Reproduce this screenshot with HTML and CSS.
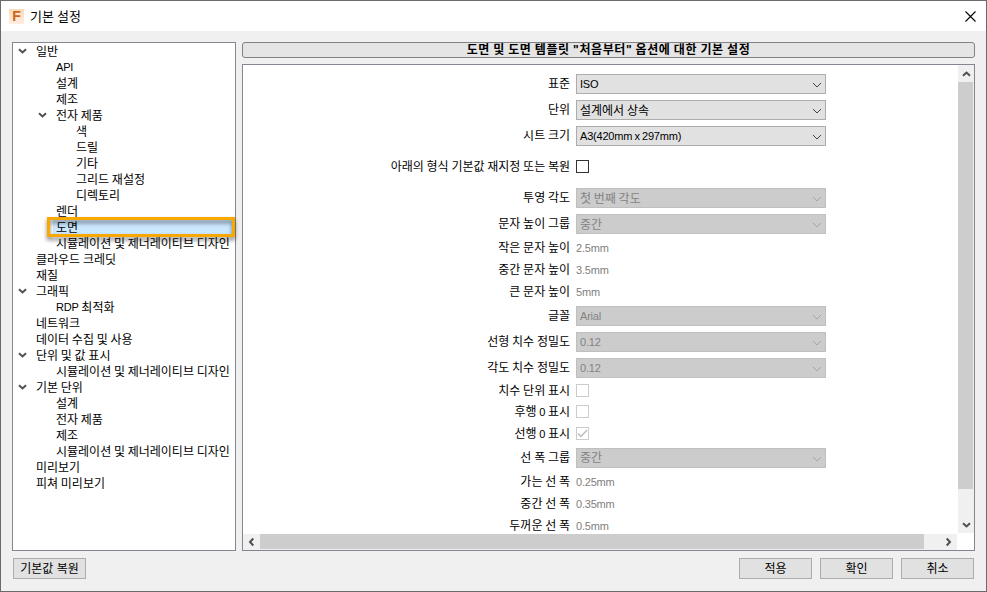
FILE: index.html
```html
<!DOCTYPE html>
<html lang="ko">
  <head>
    <meta charset="UTF-8" />
    <meta name="viewport" content="width=device-width, initial-scale=1.0" />
    <title>기본 설정</title>
    <link rel="stylesheet" href="styles.css">
  </head>
  <body>
    <!-- 공용 아이콘 -->
    <svg class="icon-defs">
      <symbol id="chevron" viewBox="0 0 10 6"><path d="M1 1l4 4 4-4" fill="none" stroke="currentColor" /></symbol>
      <symbol id="arrow" viewBox="0 0 9 6"><path d="M1 1.2l3.5 3.3L8 1.2" fill="none" stroke="currentColor" stroke-width="2" /></symbol>
    </svg>

    <div class="dialog">
      <div class="titlebar">
        <span class="app-icon">F</span>
        <span class="title">기본 설정</span>
        <svg class="close" width="11" height="11" viewBox="0 0 11 11"><path d="M.5.5l10 10M10.5.5l-10 10" stroke="#000" stroke-width="1.1" /></svg>
      </div>

      <div class="main">
        <div class="tree">
          <div class="node"><svg class="toggle"><use href="#arrow" /></svg>일반</div>
          <div class="node level-2"><span class="latin">API</span></div>
          <div class="node level-2">설계</div>
          <div class="node level-2">제조</div>
          <div class="node level-2"><svg class="toggle"><use href="#arrow" /></svg>전자 제품</div>
          <div class="node level-3">색</div>
          <div class="node level-3">드릴</div>
          <div class="node level-3">기타</div>
          <div class="node level-3">그리드 재설정</div>
          <div class="node level-3">디렉토리</div>
          <div class="node level-2">렌더</div>
          <div class="node level-2 selected">도면<span class="highlight"></span></div>
          <div class="node level-2">시뮬레이션 및 제너레이티브 디자인</div>
          <div class="node">클라우드 크레딧</div>
          <div class="node">재질</div>
          <div class="node"><svg class="toggle"><use href="#arrow" /></svg>그래픽</div>
          <div class="node level-2"><span class="latin">RDP</span>&nbsp;최적화</div>
          <div class="node">네트워크</div>
          <div class="node">데이터 수집 및 사용</div>
          <div class="node"><svg class="toggle"><use href="#arrow" /></svg>단위 및 값 표시</div>
          <div class="node level-2">시뮬레이션 및 제너레이티브 디자인</div>
          <div class="node"><svg class="toggle"><use href="#arrow" /></svg>기본 단위</div>
          <div class="node level-2">설계</div>
          <div class="node level-2">전자 제품</div>
          <div class="node level-2">제조</div>
          <div class="node level-2">시뮬레이션 및 제너레이티브 디자인</div>
          <div class="node">미리보기</div>
          <div class="node">피쳐 미리보기</div>
        </div>

        <div class="content">
          <div class="heading">도면 및 도면 템플릿 "처음부터" 옵션에 대한 기본 설정</div>
          <div class="panel">
            <div class="form">
              <div class="row"><label>표준</label><div class="select latin">ISO<svg><use href="#chevron" /></svg></div></div>
              <div class="row"><label>단위</label><div class="select">설계에서 상속<svg><use href="#chevron" /></svg></div></div>
              <div class="row"><label>시트 크기</label><div class="select latin">A3(420mm x 297mm)<svg><use href="#chevron" /></svg></div></div>
              <div class="row tall"><label>아래의 형식 기본값 재지정 또는 복원</label><span class="check"></span></div>
              <div class="row"><label>투영 각도</label><div class="select disabled">첫 번째 각도<svg><use href="#chevron" /></svg></div></div>
              <div class="row"><label>문자 높이 그룹</label><div class="select disabled">중간<svg><use href="#chevron" /></svg></div></div>
              <div class="row text"><label>작은 문자 높이</label><span class="value latin">2.5mm</span></div>
              <div class="row text"><label>중간 문자 높이</label><span class="value latin">3.5mm</span></div>
              <div class="row text"><label>큰 문자 높이</label><span class="value latin">5mm</span></div>
              <div class="row"><label>글꼴</label><div class="select disabled latin">Arial<svg><use href="#chevron" /></svg></div></div>
              <div class="row"><label>선형 치수 정밀도</label><div class="select disabled latin">0.12<svg><use href="#chevron" /></svg></div></div>
              <div class="row"><label>각도 치수 정밀도</label><div class="select disabled latin">0.12<svg><use href="#chevron" /></svg></div></div>
              <div class="row option"><label>치수 단위 표시</label><span class="check disabled"></span></div>
              <div class="row option"><label>후행 <span class="latin">0</span> 표시</label><span class="check disabled"></span></div>
              <div class="row option"><label>선행 <span class="latin">0</span> 표시</label><span class="check disabled"><svg width="11" height="11" viewBox="0 0 11 11"><path d="M1 5.5l3 3 6-6.5" fill="none" stroke="#bbb" stroke-width="1.4" /></svg></span></div>
              <div class="row"><label>선 폭 그룹</label><div class="select disabled">중간<svg><use href="#chevron" /></svg></div></div>
              <div class="row text"><label>가는 선 폭</label><span class="value latin">0.25mm</span></div>
              <div class="row text"><label>중간 선 폭</label><span class="value latin">0.35mm</span></div>
              <div class="row text"><label>두꺼운 선 폭</label><span class="value latin">0.5mm</span></div>
            </div>
            <div class="scroll-y">
              <svg class="up"><use href="#arrow" /></svg>
              <div class="thumb"></div>
              <svg class="down"><use href="#arrow" /></svg>
            </div>
            <div class="scroll-x">
              <svg class="left"><use href="#arrow" /></svg>
              <div class="thumb"></div>
              <svg class="right"><use href="#arrow" /></svg>
            </div>
          </div>
        </div>
      </div>

      <div class="footer">
        <button class="restore">기본값 복원</button>
        <button>적용</button>
        <button>확인</button>
        <button>취소</button>
      </div>
    </div>
  </body>
</html>
```
FILE: styles.css
```css
* {
  box-sizing: border-box;
}
body {
  margin: 0;
  font-family: "Liberation Sans", "Noto Sans CJK KR", sans-serif;
  font-size: 12px;
  word-spacing: -0.6px;
  color: #000;
}
svg {
  display: block;
  flex: none;
}
.icon-defs {
  position: absolute;
  width: 0;
  height: 0;
}
.latin {
  font-size: 11px;
  letter-spacing: -0.2px;
}
.dialog {
  display: flex;
  flex-direction: column;
  width: 987px;
  height: 592px;
  border: 1px solid #6b6b6b;
  background-color: #f0f0f0;
  overflow: hidden;
}

/* 제목 표시줄 */
.titlebar {
  display: flex;
  align-items: center;
  height: 30px;
  padding: 0 10px 0 8px;
  background-color: #fff;
}
.app-icon {
  width: 15px;
  height: 15px;
  margin-right: 6px;
  background: linear-gradient(#fbd9b8, #fdeee2);
  color: #c9681c;
  font-size: 14px;
  font-weight: bold;
  line-height: 14px;
  text-align: center;
}
.title {
  padding-bottom: 2px;
  font-size: 13px;
}
.close {
  margin-left: auto;
}

.main {
  display: flex;
  gap: 6px;
  height: 509px;
  margin: 11px 11px 0;
}

/* 왼쪽 트리 */
.tree {
  width: 224px;
  border: 1px solid #828790;
  background-color: #fff;
}
.node {
  position: relative;
  display: flex;
  align-items: center;
  height: 16px;
  padding-top: 2px;
  padding-left: 23px;
  line-height: 16px;
  white-space: nowrap;
}
.node .latin {
  margin-bottom: 2px;
}
.level-2 {
  padding-left: 43px;
}
.level-3 {
  padding-left: 63px;
}
.toggle {
  width: 9px;
  height: 6px;
  margin: 0 9px 2px -18px;
  color: #505050;
}
.selected {
  margin-left: 40px;
  padding-left: 3px;
  background-color: #cce8ff;
}
.highlight {
  position: absolute;
  top: -2px;
  left: -6px;
  width: 188px;
  height: 20px;
  border: 3px solid #f9a800;
  filter: drop-shadow(0 3px 2px rgba(0, 0, 0, 0.5));
  z-index: 1;
}

/* 오른쪽 설정 */
.content {
  display: flex;
  flex-direction: column;
  gap: 6px;
  width: 733px;
}
.heading {
  height: 16px;
  border: 1px solid #828282;
  border-radius: 3px;
  background-color: #e5e5e5;
  font-weight: bold;
  letter-spacing: 0.6px;
  line-height: 15px;
  text-align: center;
}
.panel {
  display: grid;
  grid-template-columns: 1fr 17px;
  grid-template-rows: 1fr 17px;
  height: 487px;
  border: 1px solid #828790;
  background-color: #fff;
}
.form {
  display: flex;
  flex-direction: column;
  gap: 6px;
  height: 468px;
  padding-top: 9px;
}
.row {
  display: flex;
  flex: none;
  align-items: center;
  gap: 6px;
  height: 20px;
}
.row.tall {
  height: 30px;
}
.row.tall .check {
  margin-bottom: 1px;
}
.row.text {
  height: 16px;
}
.row.option {
  align-items: flex-start;
  height: 15.33px;
}
label {
  width: 327px;
  padding-top: 1px;
  line-height: 15px;
  text-align: right;
  white-space: nowrap;
}
.row.option label {
  padding-top: 0;
}
.select {
  display: flex;
  align-items: center;
  justify-content: space-between;
  width: 250px;
  height: 20px;
  padding: 1px 3px 0;
  border: 1px solid #adadad;
  background-color: #e1e1e1;
  line-height: 18px;
}
.select.latin {
  padding-top: 0;
}
.select svg {
  width: 10px;
  height: 6px;
  margin-top: 1px;
  color: #444;
}
.select.disabled {
  border-color: #bfbfbf;
  background-color: #ccc;
  color: #838383;
}
.select.disabled svg {
  color: #a5a5a5;
}
.value {
  color: #808080;
}
.check {
  width: 13px;
  height: 13px;
  border: 1px solid #333;
  background-color: #fff;
}
.check.disabled {
  border-color: #ccc;
}

/* 스크롤바 */
.scroll-y,
.scroll-x {
  display: flex;
  align-items: center;
  background-color: #f0f0f0;
}
.scroll-y {
  flex-direction: column;
  width: 16px;
  height: 468px;
  margin-left: 1px;
}
.scroll-x {
  width: 714px;
  height: 16px;
  margin-top: 1px;
}
.scroll-y svg,
.scroll-x svg {
  width: 9px;
  height: 6px;
  color: #505050;
}
.scroll-y .up {
  margin: 6px 0 5px;
  transform: rotate(180deg);
}
.scroll-y .down {
  margin: auto 0 5px;
}
.scroll-y .thumb {
  width: 15px;
  height: 407px;
  margin-right: 1px;
  background-color: #cdcdcd;
}
.scroll-x .left {
  margin: 0 4px;
  transform: rotate(90deg);
}
.scroll-x .right {
  margin: 0 4px 0 auto;
  transform: rotate(-90deg);
}
.scroll-x .thumb {
  width: 664px;
  height: 15px;
  margin-bottom: 1px;
  background-color: #cdcdcd;
}

.footer {
  display: flex;
  gap: 8px;
  padding: 7px 12px 0;
}
button {
  width: 73px;
  height: 21px;
  padding: 1px 0 0;
  border: 1px solid #adadad;
  background-color: #e1e1e1;
  color: #000;
  font-family: inherit;
  font-size: 12px;
  line-height: 19px;
}
.restore {
  margin-right: auto;
}
```
